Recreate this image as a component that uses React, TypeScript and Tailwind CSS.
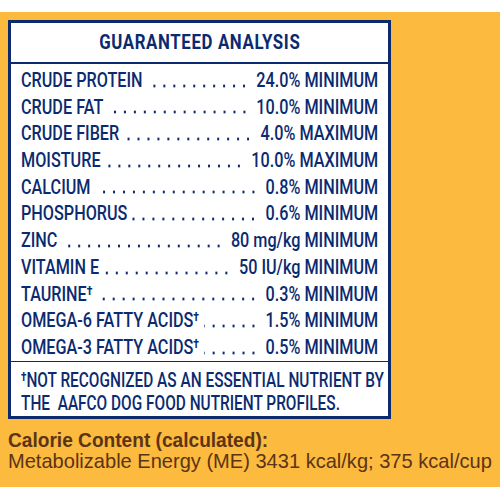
import React from "react";

const rows: { label: string; dagger?: boolean; value: string }[] = [
  { label: "CRUDE PROTEIN", value: "24.0% MINIMUM" },
  { label: "CRUDE FAT", value: "10.0% MINIMUM" },
  { label: "CRUDE FIBER", value: "4.0% MAXIMUM" },
  { label: "MOISTURE", value: "10.0% MAXIMUM" },
  { label: "CALCIUM", value: "0.8% MINIMUM" },
  { label: "PHOSPHORUS", value: "0.6% MINIMUM" },
  { label: "ZINC", value: "80 mg/kg MINIMUM" },
  { label: "VITAMIN E", value: "50 IU/kg MINIMUM" },
  { label: "TAURINE", dagger: true, value: "0.3% MINIMUM" },
  { label: "OMEGA-6 FATTY ACIDS", dagger: true, value: "1.5% MINIMUM" },
  { label: "OMEGA-3 FATTY ACIDS", dagger: true, value: "0.5% MINIMUM" },
];

export default function App() {
  return (
    <div className="w-[500px] h-[500px] bg-white pt-[12px]">
      <div className="bg-[#FCBA3F] h-[475px] pl-[8px] pt-[8px] overflow-hidden">
        <div className="w-[383px] h-[399px] border-[3px] border-[#0B2A6F] bg-white flex flex-col text-[#0B2A6F] font-['Roboto',sans-serif] overflow-hidden">
          <div className="h-[39px] flex items-center justify-center shrink-0">
            <div className="scale-x-[0.8] font-bold text-[21px] tracking-[0.8px] leading-none whitespace-nowrap">
              GUARANTEED ANALYSIS
            </div>
          </div>
          <div className="h-[2px] bg-[#0B2A6F] shrink-0" />
          <div className="pl-[10px] pt-[3px] shrink-0">
            <div className="w-[441px] origin-left scale-x-[0.81] text-[20px] font-medium">
              {rows.map((r) => (
                <div key={r.label} className="h-[26.7px] leading-[26.7px] flex whitespace-nowrap">
                  <span className="shrink-0">
                    {r.label}
                    {r.dagger && <span className="text-[13px] relative -top-[6px] font-bold">†</span>}
                  </span>
                  <div className="flex-1 min-w-0 ml-[6px] bg-[radial-gradient(circle,#0B2A6F_1.3px,transparent_1.8px)] bg-[length:12.3px_4px] bg-[position:right_bottom_6px] bg-repeat-x" />
                  <span className="ml-[9px] shrink-0">{r.value}</span>
                </div>
              ))}
            </div>
          </div>
          <div className="h-[1.5px] bg-[#0B2A6F] shrink-0" />
          <div className="pl-[10px] pt-[8px]">
            <div className="w-[466px] origin-left scale-x-[0.77] text-[20px] font-medium leading-[20px] whitespace-pre">
              <div>
                <span className="text-[13px] relative -top-[6px] font-bold">†</span>NOT RECOGNIZED AS AN ESSENTIAL NUTRIENT BY
              </div>
              <div>THE  AAFCO DOG FOOD NUTRIENT PROFILES.</div>
            </div>
          </div>
        </div>
        <div className="mt-[10px] text-[#5B3416] font-['Liberation_Sans',Arial,sans-serif] text-[21px] leading-[21px] whitespace-nowrap">
          <div>
            <span className="inline-block origin-left scale-x-[0.91] font-bold">Calorie Content (calculated):</span>
          </div>
          <div>
            <span className="inline-block origin-left scale-x-[0.955]">
              Metabolizable Energy (ME) 3431 kcal/kg; 375 kcal/cup
            </span>
          </div>
        </div>
      </div>
    </div>
  );
}
